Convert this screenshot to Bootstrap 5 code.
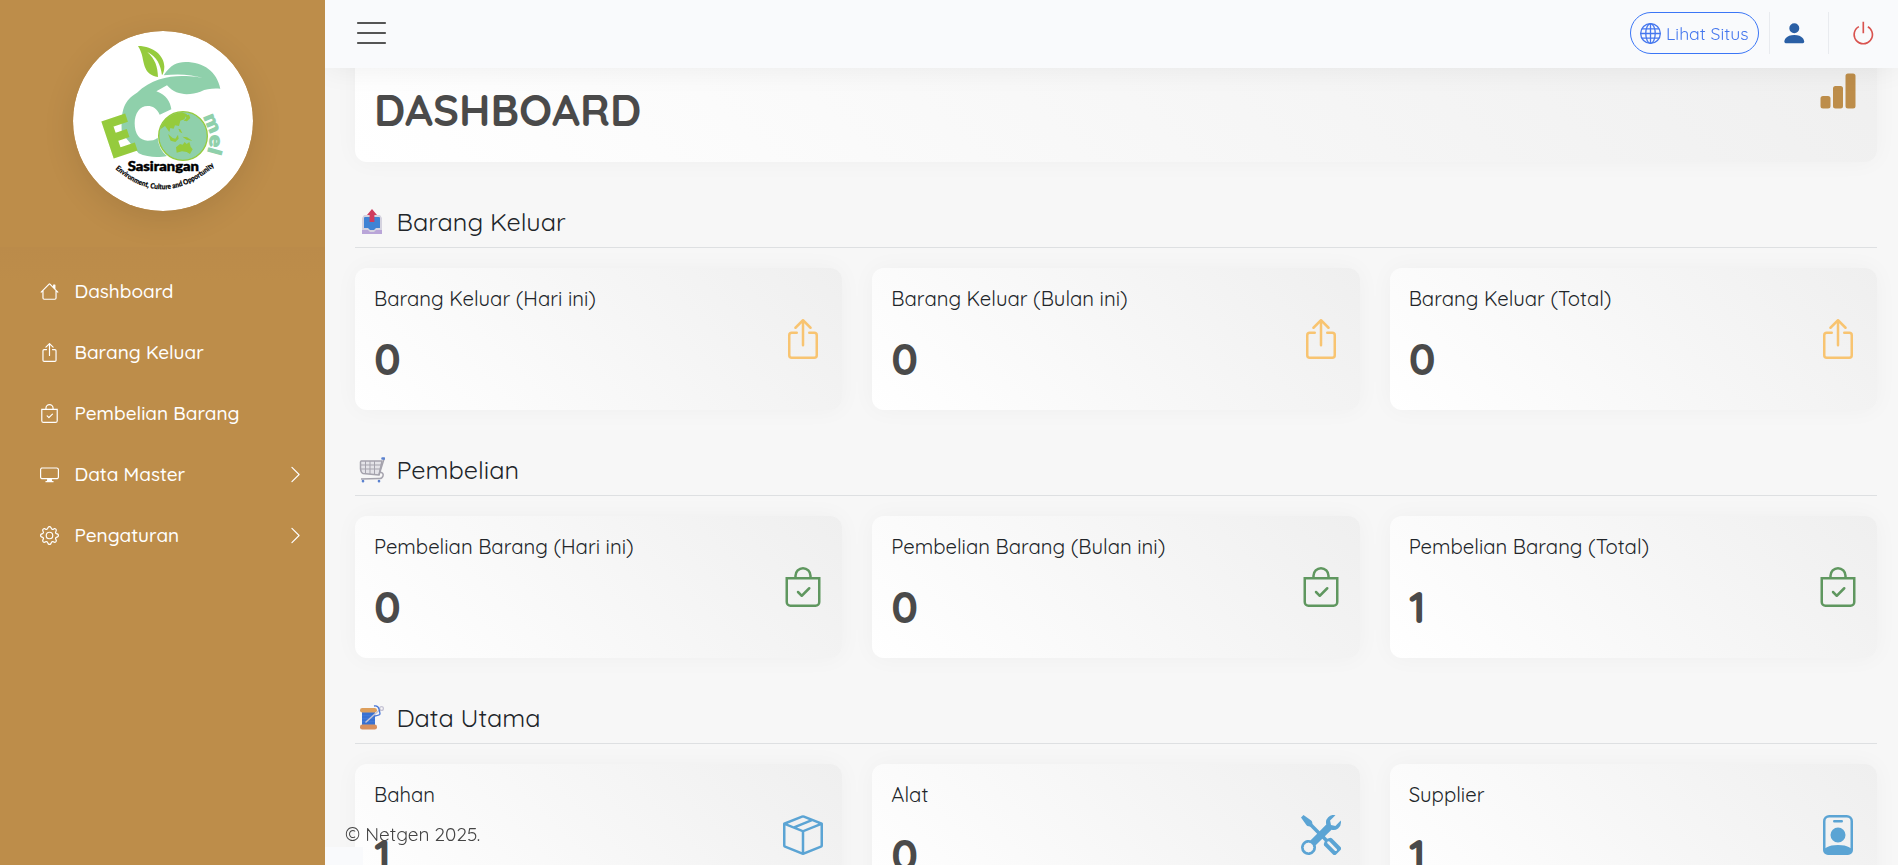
<!DOCTYPE html>
<html lang="id">
<head>
<meta charset="utf-8">
<meta name="viewport" content="width=device-width, initial-scale=1">
<title>Dashboard</title>
<link href="https://cdn.jsdelivr.net/npm/bootstrap@5.3.0/dist/css/bootstrap.min.css" rel="stylesheet">
<style>
  body { font-family: Quicksand, Lato, sans-serif; background: #f7f7f7; color: #212529; height: 100vh; overflow: hidden; }
  svg { display: block; flex: none; }
  .bi { fill: currentColor; width: 1em; height: 1em; }

  .side-panel { width: 325px; background: #bd8d4a; z-index: 1040; }
  .brand-area { height: 247px; padding-top: 31px; }
  .brand-logo { width: 180px; height: 180px; border-radius: 50%; box-shadow: 0 8px 32px rgba(0,0,0,.1); }
  .side-menu { background: linear-gradient(#bb8b4a, #bd8d4a 34px); padding-top: 14px; }
  .side-link { height: 61px; padding: 0 20px 0 40px; color: #fff; font-size: 19px; font-weight: 500; }
  .side-link .side-text { margin-left: 15.5px; }

  .top-bar { left: 325px; height: 68px; background: #f9fafc; box-shadow: 0 0 30px rgba(0,0,0,.065); padding: 0 11px 2px 26px; }
  .btn-site { --bs-btn-color: #4577ee; --bs-btn-border-color: #3b76f6; width: 129px; height: 42px; border-radius: 21px; padding: 0 0 0 9px; font-size: 17.6px; margin-right: 10px; }
  .btn-site .site-text { margin-left: 5px; }
  .top-cell { width: 59px; height: 42px; border-left: 1px solid #e9ebef; font-size: 26.6px; padding-left: 11px; }
  .top-cell.power-cell { padding-left: 20.5px; }

  .page-body { margin-left: 325px; padding: 20px 21px 0 30px; }
  .stat-card { height: 142px; border: 0; border-radius: 12px; background: linear-gradient(45deg, #fff, #efefef); box-shadow: 0 0 24px rgba(0,0,0,.035); padding: 0 19px; }
  .stat-label { font-size: 20.3px; line-height: 24px; padding-top: 19px; white-space: nowrap; }
  .stat-value { font-size: 43.7px; font-weight: 700; line-height: 48px; color: #4a4a4a; padding-top: 24px; }
  .stat-value.title-text { padding-top: 23px; }
  .stat-icon { font-size: 40px; }
  .group-title { height: 56px; margin: 30px 0 20px; padding-top: 4px; border-bottom: 1px solid #dee0e2; font-size: 25.2px; padding-left: 4px; }
  .group-title .group-text { margin-left: 11.5px; }
  .stat-row { --bs-gutter-x: 30px; }
  .c-brown { color: #bd8d4a; } .c-amber { color: #f8c471; } .c-green { color: #5f975f; } .c-blue { color: #5ba4d4; }

  .page-foot { left: 325px; font-size: 19px; height: 45px; padding-left: 20px; color: #444; font-weight: 400; }
  .foot-block { left: 325px; bottom: 0; width: 38px; height: 18px; background: #f9fafc; }
</style>
</head>
<body>

<svg class="d-none" xmlns="http://www.w3.org/2000/svg">
  <symbol id="house" viewBox="0 0 16 16"><path d="M8.707 1.5a1 1 0 0 0-1.414 0L.646 8.146a.5.5 0 0 0 .708.708L2 8.207V13.5A1.5 1.5 0 0 0 3.5 15h9a1.5 1.5 0 0 0 1.5-1.5V8.207l.646.647a.5.5 0 0 0 .708-.708L13 5.793V2.5a.5.5 0 0 0-.5-.5h-1a.5.5 0 0 0-.5.5v1.293L8.707 1.5ZM13 7.207V13.5a.5.5 0 0 1-.5.5h-9a.5.5 0 0 1-.5-.5V7.207l5-5 5 5Z"/></symbol>
  <symbol id="box-up" viewBox="0 0 16 16"><path d="M3.5 6a.5.5 0 0 0-.5.5v8a.5.5 0 0 0 .5.5h9a.5.5 0 0 0 .5-.5v-8a.5.5 0 0 0-.5-.5h-2a.5.5 0 0 1 0-1h2A1.5 1.5 0 0 1 14 6.5v8a1.5 1.5 0 0 1-1.5 1.5h-9A1.5 1.5 0 0 1 2 14.5v-8A1.5 1.5 0 0 1 3.5 5h2a.5.5 0 0 1 0 1h-2z"/><path d="M7.646.146a.5.5 0 0 1 .708 0l3 3a.5.5 0 0 1-.708.708L8.5 1.707V10.5a.5.5 0 0 1-1 0V1.707L5.354 3.854a.5.5 0 1 1-.708-.708l3-3z"/></symbol>
  <symbol id="bag" viewBox="0 0 16 16"><path d="M10.854 8.146a.5.5 0 0 1 0 .708l-3 3a.5.5 0 0 1-.708 0l-1.5-1.5a.5.5 0 0 1 .708-.708L7.5 10.793l2.646-2.647a.5.5 0 0 1 .708 0z"/><path d="M8 1a2.5 2.5 0 0 1 2.5 2.5V4h-5v-.5A2.5 2.5 0 0 1 8 1zm3.5 3v-.5a3.5 3.5 0 1 0-7 0V4H1v10a2 2 0 0 0 2 2h10a2 2 0 0 0 2-2V4h-3.5zM2 5h12v9a1 1 0 0 1-1 1H3a1 1 0 0 1-1-1V5z"/></symbol>
  <symbol id="display" viewBox="0 0 16 16"><path d="M0 4s0-2 2-2h12s2 0 2 2v6s0 2-2 2h-4c0 .667.083 1.167.25 1.5H11a.5.5 0 0 1 0 1H5a.5.5 0 0 1 0-1h.75c.167-.333.25-.833.25-1.5H2s-2 0-2-2V4zm1.398-.855a.758.758 0 0 0-.254.302A1.46 1.46 0 0 0 1 4.01V10c0 .325.078.502.145.602.07.105.17.188.302.254a1.464 1.464 0 0 0 .538.143L2.01 11H14c.325 0 .502-.078.602-.145a.758.758 0 0 0 .254-.302 1.464 1.464 0 0 0 .143-.538L15 9.99V4c0-.325-.078-.502-.145-.602a.757.757 0 0 0-.302-.254A1.46 1.46 0 0 0 13.99 3H2c-.325 0-.502.078-.602.145z"/></symbol>
  <symbol id="gear" viewBox="0 0 16 16"><path d="M8 4.754a3.246 3.246 0 1 0 0 6.492 3.246 3.246 0 0 0 0-6.492zM5.754 8a2.246 2.246 0 1 1 4.492 0 2.246 2.246 0 0 1-4.492 0z"/><path d="M9.796 1.343c-.527-1.79-3.065-1.79-3.592 0l-.094.319a.873.873 0 0 1-1.255.52l-.292-.16c-1.64-.892-3.433.902-2.54 2.541l.159.292a.873.873 0 0 1-.52 1.255l-.319.094c-1.79.527-1.79 3.065 0 3.592l.319.094a.873.873 0 0 1 .52 1.255l-.16.292c-.892 1.64.901 3.434 2.541 2.54l.292-.159a.873.873 0 0 1 1.255.52l.094.319c.527 1.79 3.065 1.79 3.592 0l.094-.319a.873.873 0 0 1 1.255-.52l.292.16c1.64.893 3.434-.902 2.54-2.541l-.159-.292a.873.873 0 0 1 .52-1.255l.319-.094c1.79-.527 1.79-3.065 0-3.592l-.319-.094a.873.873 0 0 1-.52-1.255l.16-.292c.893-1.64-.902-3.433-2.541-2.54l-.292.159a.873.873 0 0 1-1.255-.52l-.094-.319zm-2.633.283c.246-.835 1.428-.835 1.674 0l.094.319a1.873 1.873 0 0 0 2.693 1.115l.291-.16c.764-.415 1.6.42 1.184 1.185l-.159.292a1.873 1.873 0 0 0 1.116 2.692l.318.094c.835.246.835 1.428 0 1.674l-.319.094a1.873 1.873 0 0 0-1.115 2.693l.16.291c.415.764-.42 1.6-1.185 1.184l-.291-.159a1.873 1.873 0 0 0-2.693 1.116l-.094.318c-.246.835-1.428.835-1.674 0l-.094-.319a1.873 1.873 0 0 0-2.692-1.115l-.292.16c-.764.415-1.6-.42-1.184-1.185l.159-.291A1.873 1.873 0 0 0 1.945 8.93l-.319-.094c-.835-.246-.835-1.428 0-1.674l.319-.094A1.873 1.873 0 0 0 3.06 4.377l-.16-.292c-.415-.764.42-1.6 1.185-1.184l.292.159a1.873 1.873 0 0 0 2.692-1.115l.094-.319z"/></symbol>
  <symbol id="chevron" viewBox="0 0 16 16"><path d="M4.646 1.646a.5.5 0 0 1 .708 0l6 6a.5.5 0 0 1 0 .708l-6 6a.5.5 0 0 1-.708-.708L10.293 8 4.646 2.354a.5.5 0 0 1 0-.708z"/></symbol>
  <symbol id="bars" viewBox="0 0 16 16"><path d="M1 11a1 1 0 0 1 1-1h2a1 1 0 0 1 1 1v3a1 1 0 0 1-1 1H2a1 1 0 0 1-1-1v-3zm5-4a1 1 0 0 1 1-1h2a1 1 0 0 1 1 1v7a1 1 0 0 1-1 1H7a1 1 0 0 1-1-1V7zm5-5a1 1 0 0 1 1-1h2a1 1 0 0 1 1 1v12a1 1 0 0 1-1 1h-2a1 1 0 0 1-1-1V2z"/></symbol>
  <symbol id="cube" viewBox="0 0 16 16"><path d="M8.186 1.113a.5.5 0 0 0-.372 0L1.846 3.5l2.404.961L10.404 2l-2.218-.887zm3.564 1.426L5.596 5 8 5.961 14.154 3.5l-2.404-.961zm3.25 1.7-6.5 2.6v7.922l6.5-2.6V4.24zM7.5 14.762V6.838L1 4.239v7.923l6.5 2.6zM7.443.184a1.5 1.5 0 0 1 1.114 0l7.129 2.852A.5.5 0 0 1 16 3.5v8.662a1 1 0 0 1-.629.928l-7.185 2.874a.5.5 0 0 1-.372 0L.63 13.09a1 1 0 0 1-.63-.928V3.5a.5.5 0 0 1 .314-.464L7.443.184z"/></symbol>
  <symbol id="tools" viewBox="0 0 16 16"><path fill-rule="evenodd" d="M1 0 0 1l2.2 3.081a1 1 0 0 0 .815.419h.07a1 1 0 0 1 .708.293l2.675 2.675-2.617 2.654A3.003 3.003 0 0 0 0 13a3 3 0 1 0 5.878-.851l2.654-2.617.968.968-.305.914a1 1 0 0 0 .242 1.023l3.27 3.27a.997.997 0 0 0 1.414 0l1.586-1.586a.997.997 0 0 0 0-1.414l-3.27-3.27a1 1 0 0 0-1.023-.242L10.5 9.5l-.96-.96 2.68-2.643A3.005 3.005 0 0 0 16 3c0-.269-.035-.53-.102-.777l-2.14 2.141L12 4l-.364-1.757L13.777.102a3 3 0 0 0-3.675 3.68L7.462 6.46 4.793 3.793a1 1 0 0 1-.293-.707v-.071a1 1 0 0 0-.419-.814L1 0zm9.646 10.646a.5.5 0 0 1 .708 0l2.914 2.915a.5.5 0 0 1-.707.707l-2.915-2.914a.5.5 0 0 1 0-.708zM3 11l.471.242.529.026.287.445.445.287.026.529L5 13l-.242.471-.026.529-.445.287-.287.445-.529.026L3 15l-.471-.242L2 14.732l-.287-.445L1.268 14l-.026-.529L1 13l.242-.471.026-.529.445-.287.287-.445.529-.026L3 11z"/></symbol>
  <symbol id="id-badge" viewBox="0 0 16 16"><path d="M6.5 2a.5.5 0 0 0 0 1h3a.5.5 0 0 0 0-1h-3zM11 8a3 3 0 1 1-6 0 3 3 0 0 1 6 0z"/><path d="M4.5 0A2.5 2.5 0 0 0 2 2.5V14a2 2 0 0 0 2 2h8a2 2 0 0 0 2-2V2.5A2.5 2.5 0 0 0 11.5 0h-7zM3 2.5A1.5 1.5 0 0 1 4.5 1h7A1.5 1.5 0 0 1 13 2.5v10.795a4.2 4.2 0 0 0-.776-.492C11.392 12.387 10.063 12 8 12s-3.392.387-4.224.803a4.2 4.2 0 0 0-.776.492V2.5z"/></symbol>
  <symbol id="person" viewBox="0 0 16 16"><path d="M3 14s-1 0-1-1 1-4 6-4 6 3 6 4-1 1-1 1H3Zm5-6a3 3 0 1 0 0-6 3 3 0 0 0 0 6Z"/></symbol>
  <symbol id="power" viewBox="0 0 16 16"><path d="M7.5 1v7h1V1h-1z"/><path d="M3 8.812a4.999 4.999 0 0 1 2.578-4.375l-.485-.874A6 6 0 1 0 11 3.616l-.501.865A5 5 0 1 1 3 8.812z"/></symbol>
</svg>

<!-- Sidebar -->
<aside class="side-panel position-fixed top-0 start-0 bottom-0 d-flex flex-column">
  <div class="brand-area d-flex justify-content-center align-items-start">
    <svg class="brand-logo" viewBox="218 93 540 540" font-family="Lato, sans-serif">
      <circle cx="488" cy="363" r="270" fill="#fff"/>
      <path fill="#8fd0ab" d="M468 274C498 284 510 306 513 328L478 344C470 325 457 318 442 318 418 318 403 340 403 370 403 402 418 422 442 422 454 422 464 420 472 413 475 440 485 455 500 468 475 473 440 472 415 460L365 400C360 330 372 300 410 278 450 240 500 228 545 228 580 228 600 232 614 236 570 222 530 222 490 226 510 195 530 186 555 186 610 186 650 215 660 266 635 265 620 266 600 275 570 285 530 290 500 256Z"/>
      <path fill="#95cb3d" d="M413 138C460 138 492 168 492 200 492 212 489 220 485 226 481 195 470 170 441 156 465 178 472 200 473 231 430 224 432 190 424 162 421 152 417 145 413 138Z"/>
      <text transform="translate(332 474) rotate(-18.5)" font-size="150" font-weight="900" fill="#95cb3d" stroke="#95cb3d" stroke-width="8" textLength="84" lengthAdjust="spacingAndGlyphs">E</text>
      <circle cx="548" cy="408" r="73" fill="#8fd0ab" stroke="#95cb3d" stroke-width="4"/>
      <path fill="#95cb3d" d="M480 388C488 358 515 338 545 337L560 343 552 358 540 362 536 378 524 376 520 386 510 384 507 396 500 386 494 378ZM556 346l10-2 4 10-10 10-10-2 8-8ZM503 402l14 12 8 2 8-12 2 12-10 10-14-4ZM534 386l6 2 6 12-8-4ZM546 410l14 2 16 10-16-2ZM527 442l12-10 8 2 6-8 6 6 8-6 4 14 6 8-8 14-10-6-14-2-16 4Z"/>
      <path id="arcMel" d="M606 352Q642 402 620 460" fill="none"/>
      <text font-size="56" font-weight="900" fill="#8fd0ab" stroke="#8fd0ab" stroke-width="3"><textPath href="#arcMel" textLength="110" lengthAdjust="spacingAndGlyphs">mel</textPath></text>
      <text x="382" y="513" font-size="38" font-weight="900" stroke="#000" stroke-width="1.4" textLength="214" lengthAdjust="spacingAndGlyphs">Sasirangan</text>
      <path id="arcTag" d="M345 507Q490 634 645 496" fill="none"/>
      <text font-size="22" font-weight="900" stroke="#000" stroke-width=".6"><textPath href="#arcTag" textLength="332" lengthAdjust="spacingAndGlyphs">Environment, Culture and Opportunity</textPath></text>
    </svg>
  </div>
  <nav class="side-menu nav flex-column flex-nowrap flex-grow-1">
    <a class="side-link d-flex align-items-center text-decoration-none" href="#"><svg class="bi"><use href="#house"/></svg><span class="side-text">Dashboard</span></a>
    <a class="side-link d-flex align-items-center text-decoration-none" href="#"><svg class="bi"><use href="#box-up"/></svg><span class="side-text">Barang Keluar</span></a>
    <a class="side-link d-flex align-items-center text-decoration-none" href="#"><svg class="bi"><use href="#bag"/></svg><span class="side-text">Pembelian Barang</span></a>
    <a class="side-link d-flex align-items-center text-decoration-none" href="#"><svg class="bi"><use href="#display"/></svg><span class="side-text">Data Master</span><svg class="bi ms-auto"><use href="#chevron"/></svg></a>
    <a class="side-link d-flex align-items-center text-decoration-none" href="#"><svg class="bi"><use href="#gear"/></svg><span class="side-text">Pengaturan</span><svg class="bi ms-auto"><use href="#chevron"/></svg></a>
  </nav>
</aside>

<!-- Top bar -->
<header class="top-bar fixed-top d-flex align-items-center">
  <svg width="40" height="40" viewBox="0 0 40 40" stroke="#555" stroke-width="2.2" stroke-linecap="round"><path d="M7 10H34M7 20H34M7 30H34"/></svg>
  <a class="btn btn-site btn-outline-primary d-flex align-items-center ms-auto" href="#">
    <svg width="21" height="21" viewBox="0 0 16 16" fill="none" stroke="currentColor"><circle cx="8" cy="8" r="7.5"/><ellipse cx="8" cy="8" rx="3.6" ry="7.5"/><path d="M8 .5v15M.5 8h15M1.5 4.5h13M1.5 11.5h13"/></svg>
    <span class="site-text">Lihat Situs</span>
  </a>
  <div class="top-cell d-flex align-items-center"><svg class="bi" color="#2a5fa5"><use href="#person"/></svg></div>
  <div class="top-cell power-cell d-flex align-items-center"><svg class="bi" color="#d9534f"><use href="#power"/></svg></div>
</header>

<!-- Content -->
<main class="page-body">
  <div class="card stat-card flex-row align-items-center justify-content-between">
    <div class="align-self-start"><div class="stat-label">&nbsp;</div><div class="stat-value title-text">DASHBOARD</div></div>
    <svg class="bi stat-icon c-brown"><use href="#bars"/></svg>
  </div>

  <div class="group-title d-flex align-items-center">
    <svg width="26" height="26" viewBox="0 0 26 26"><path fill="#d5d3df" d="M5 6h16l2 3v13l-1 3H4l-1-3V9Z"/><path fill="#b9a5d8" d="M3 21h6l2 2h4l2-2h6v4H3Z"/><path fill="#3f83d4" d="M6 8h14q1 0 1 1v10h-4l-2 2h-4l-2-2H5V9q0-1 1-1Z"/><path fill="#cf3b5e" d="M13 0l5 6h-2.600v7h-4.800V6H8Z"/></svg>
    <span class="group-text">Barang Keluar</span>
  </div>
  <div class="row stat-row">
    <div class="col-4"><div class="card stat-card flex-row align-items-center justify-content-between"><div class="align-self-start"><div class="stat-label">Barang Keluar (Hari ini)</div><div class="stat-value">0</div></div><svg class="bi stat-icon c-amber"><use href="#box-up"/></svg></div></div>
    <div class="col-4"><div class="card stat-card flex-row align-items-center justify-content-between"><div class="align-self-start"><div class="stat-label">Barang Keluar (Bulan ini)</div><div class="stat-value">0</div></div><svg class="bi stat-icon c-amber"><use href="#box-up"/></svg></div></div>
    <div class="col-4"><div class="card stat-card flex-row align-items-center justify-content-between"><div class="align-self-start"><div class="stat-label">Barang Keluar (Total)</div><div class="stat-value">0</div></div><svg class="bi stat-icon c-amber"><use href="#box-up"/></svg></div></div>
  </div>

  <div class="group-title d-flex align-items-center">
    <svg width="26" height="26" viewBox="0 0 26 26" fill="none" stroke="#a5a3ad" stroke-width="1.500" stroke-linejoin="round"><path fill="#e4e3e8" d="M2 4h21l-3 14L4 16.500Q2 16 1.500 12L1.500 5Z"/><path stroke-width="1" d="M2 8h20M2 12h19M6.500 4v12.500M11 4v13M15.500 4v13"/><path d="M25 2l-5 16M21 15q4 1 3 4t-4 2.500L2 22" /><path stroke="#5b82cf" stroke-width="2.600" stroke-linecap="round" d="M23.500 1.500l1.500 0M4 24v.3M20 24v.3"/></svg>
    <span class="group-text">Pembelian</span>
  </div>
  <div class="row stat-row">
    <div class="col-4"><div class="card stat-card flex-row align-items-center justify-content-between"><div class="align-self-start"><div class="stat-label">Pembelian Barang (Hari ini)</div><div class="stat-value">0</div></div><svg class="bi stat-icon c-green"><use href="#bag"/></svg></div></div>
    <div class="col-4"><div class="card stat-card flex-row align-items-center justify-content-between"><div class="align-self-start"><div class="stat-label">Pembelian Barang (Bulan ini)</div><div class="stat-value">0</div></div><svg class="bi stat-icon c-green"><use href="#bag"/></svg></div></div>
    <div class="col-4"><div class="card stat-card flex-row align-items-center justify-content-between"><div class="align-self-start"><div class="stat-label">Pembelian Barang (Total)</div><div class="stat-value">1</div></div><svg class="bi stat-icon c-green"><use href="#bag"/></svg></div></div>
  </div>

  <div class="group-title d-flex align-items-center">
    <svg width="26" height="26" viewBox="0 0 26 26"><path fill="#3f78d8" d="M3 5h13v15H3Z"/><path stroke="#2f66c6" stroke-width=".7" d="M3 9h13M3 12h13M3 15h13M3 18h13"/><rect x="1" y="3" width="17" height="4.600" rx="2.300" fill="#dd9f5c"/><rect x="1" y="19.500" width="17" height="5" rx="2.300" fill="#d8905e"/><path fill="none" stroke="#c5c3d4" stroke-width="1.600" stroke-linecap="round" d="M7 17L21 4.500"/><circle cx="22.500" cy="3.500" r="1.900" fill="none" stroke="#c5c3d4" stroke-width="1.300"/><path fill="none" stroke="#4a78d8" stroke-width="1.300" d="M15 1q4-1 5 3t1 5-5 2"/></svg>
    <span class="group-text">Data Utama</span>
  </div>
  <div class="row stat-row">
    <div class="col-4"><div class="card stat-card flex-row align-items-center justify-content-between"><div class="align-self-start"><div class="stat-label">Bahan</div><div class="stat-value">1</div></div><svg class="bi stat-icon c-blue"><use href="#cube"/></svg></div></div>
    <div class="col-4"><div class="card stat-card flex-row align-items-center justify-content-between"><div class="align-self-start"><div class="stat-label">Alat</div><div class="stat-value">0</div></div><svg class="bi stat-icon c-blue"><use href="#tools"/></svg></div></div>
    <div class="col-4"><div class="card stat-card flex-row align-items-center justify-content-between"><div class="align-self-start"><div class="stat-label">Supplier</div><div class="stat-value">1</div></div><svg class="bi stat-icon c-blue"><use href="#id-badge"/></svg></div></div>
  </div>
</main>

<div class="foot-block position-fixed"></div>
<footer class="page-foot fixed-bottom">© Netgen 2025.</footer>

<script src="https://cdn.jsdelivr.net/npm/bootstrap@5.3.0/dist/js/bootstrap.bundle.min.js"></script>
</body>
</html>
